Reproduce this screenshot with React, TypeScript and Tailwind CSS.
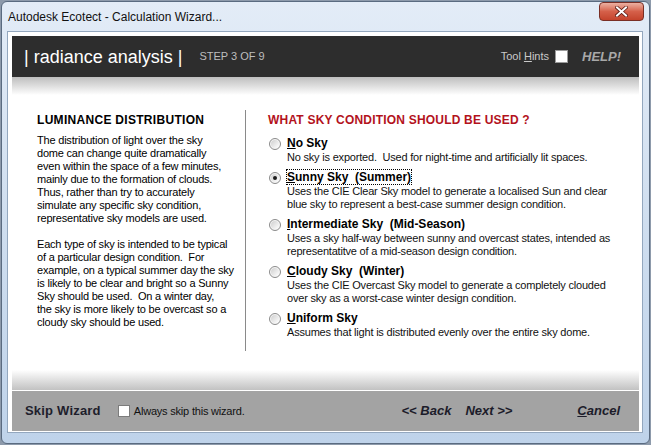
const leftText = [
  "The distribution of light over the sky",
  "dome can change quite dramatically",
  "even within the space of a few minutes,",
  "mainly due to the formation of clouds.",
  "Thus, rather than try to accurately",
  "simulate any specific sky condition,",
  "representative sky models are used.",
  "",
  "Each type of sky is intended to be typical",
  "of a particular design condition.  For",
  "example, on a typical summer day the sky",
  "is likely to be clear and bright so a Sunny",
  "Sky should be used.  On a winter day,",
  "the sky is more likely to be overcast so a",
  "cloudy sky should be used.",
];

type SkyOption = {
  key: string;
  hot: string;
  rest: string;
  lines: string[];
};

const options: SkyOption[] = [
  {
    key: "none",
    hot: "N",
    rest: "o Sky",
    lines: ["No sky is exported.  Used for night-time and artificially lit spaces."],
  },
  {
    key: "sunny",
    hot: "S",
    rest: "unny Sky  (Summer)",
    lines: [
      "Uses the CIE Clear Sky model to generate a localised Sun and clear",
      "blue sky to represent a best-case summer design condition.",
    ],
  },
  {
    key: "intermediate",
    hot: "I",
    rest: "ntermediate Sky  (Mid-Season)",
    lines: [
      "Uses a sky half-way between sunny and overcast states, intended as",
      "representatitve of a mid-season design condition.",
    ],
  },
  {
    key: "cloudy",
    hot: "C",
    rest: "loudy Sky  (Winter)",
    lines: [
      "Uses the CIE Overcast Sky model to generate a completely clouded",
      "over sky as a worst-case winter design condition.",
    ],
  },
  {
    key: "uniform",
    hot: "U",
    rest: "niform Sky",
    lines: ["Assumes that light is distributed evenly over the entire sky dome."],
  },
];

function Radio({ checked }: { checked?: boolean }) {
  return (
    <svg width="12" height="12" viewBox="0 0 12 12">
      <defs>
        <linearGradient id="radioFill" x1="0" y1="0" x2="1" y2="1">
          <stop offset="0" stopColor="#cfcfcf" />
          <stop offset="1" stopColor="#ffffff" />
        </linearGradient>
      </defs>
      <circle cx="6" cy="6" r="5.5" fill="#f6f6f6" stroke="#8b8b8b" />
      <circle cx="6" cy="6" r="4" fill="url(#radioFill)" />
      {checked && <circle cx="6" cy="6" r="2" fill="#1c1c1c" />}
    </svg>
  );
}

function CloseButton() {
  return (
    <div className="flex h-[19px] w-[45px] items-center justify-center self-start rounded-[4px] border border-[#7a2f25] bg-linear-to-b from-[#eab0a2] via-[#d5604a] to-[#c4432c]">
      <svg width="13" height="11" viewBox="0 0 13 11">
        <path d="M2 1.5 L11 9.5 M11 1.5 L2 9.5" stroke="#5a1a12" strokeWidth="3.6" strokeLinecap="square" />
        <path d="M2 1.5 L11 9.5 M11 1.5 L2 9.5" stroke="#ffffff" strokeWidth="2" strokeLinecap="square" />
      </svg>
    </div>
  );
}

export default function App() {
  return (
    <div className="h-[445px] w-[651px] bg-[#8d9aab] p-px font-['Liberation_Sans',Arial,sans-serif]">
      <div className="flex h-full flex-col rounded-[6px] border border-[#5a6b80] bg-linear-to-b from-[#e3ecf7] via-[#cfdeef] to-[#bfd3ea]">
        {/* title bar */}
        <div className="flex h-[29px] items-center justify-between pl-[6px] pr-[5px]">
          <span className="text-[12px] text-[#111]">Autodesk Ecotect - Calculation Wizard...</span>
          <CloseButton />
        </div>

        <div className="mb-[10px] ml-[5px] mr-[6px] flex flex-1 flex-col border border-[#93a7be] bg-white pb-px pl-[4px] pr-[3px] pt-[4px]">
          {/* dark header */}
          <div className="flex h-[41px] items-center bg-[#2d2d2d] pl-[12px] pr-[18px]">
            <span className="text-[18px] leading-none text-white">| radiance analysis |</span>
            <span className="ml-[17px] text-[11px] text-[#bdbdbd]">STEP 3 OF 9</span>
            <div className="ml-auto flex items-center">
              <span className="text-[11px] text-[#c9c9c9]">
                Tool <span className="underline">H</span>ints
              </span>
              <div className="ml-[6px] h-[13px] w-[13px] border border-[#9a9a9a] bg-white" />
              <span className="ml-[14px] text-[13px] font-bold italic text-[#a8a8a8]">HELP!</span>
            </div>
          </div>
          <div className="h-[18px] bg-linear-to-b from-[#bebebe] to-white" />

          {/* content */}
          <div className="flex flex-1">
            <div className="mt-[15px] h-[241px] w-[234px] border-r border-[#8a8a8a] pl-[25px] pt-[3px]">
              <div className="text-[12px] font-bold leading-[14px] tracking-[0.3px] text-black">
                LUMINANCE DISTRIBUTION
              </div>
              <div className="mt-[7px] text-[11px] leading-[13px] tracking-[-0.2px] text-black">
                {leftText.map((line, i) => (
                  <div key={i} className="h-[13px] whitespace-pre">
                    {line}
                  </div>
                ))}
              </div>
            </div>

            <div className="flex-1 pl-[22px] pt-[18px]">
              <div className="text-[12px] font-bold leading-[14px] tracking-[0.2px] text-[#b3121c]">
                WHAT SKY CONDITION SHOULD BE USED ?
              </div>
              <div className="mt-[9px] flex flex-col gap-[6px]">
                {options.map((o) => (
                  <div key={o.key} className="flex items-start">
                    <div className="ml-px flex h-[15px] items-center">
                      <Radio checked={o.key === "sunny"} />
                    </div>
                    <div className="ml-[6px]">
                      <div className="h-[15px] whitespace-pre text-[12px] font-bold leading-[15px] text-black">
                        <span
                          className={
                            o.key === "sunny"
                              ? "outline-1 outline-offset-0 outline-dotted outline-black"
                              : ""
                          }
                        >
                          <span className="underline">{o.hot}</span>
                          {o.rest}
                        </span>
                      </div>
                      {o.lines.map((l, i) => (
                        <div
                          key={i}
                          className="h-[13px] whitespace-pre text-[11px] leading-[13px] tracking-[-0.2px] text-[#111]"
                        >
                          {l}
                        </div>
                      ))}
                    </div>
                  </div>
                ))}
              </div>
            </div>
          </div>

          <div className="h-[20px] bg-linear-to-b from-white to-[#c2c2c2]" />
          {/* footer */}
          <div className="mt-px flex h-[40px] items-center bg-[#a3a3a3] pl-[13px] pr-[19px]">
            <span className="text-[13px] font-bold tracking-[0.2px] text-[#1e1e2c]">Skip Wizard</span>
            <div className="ml-[17px] h-[12px] w-[12px] border border-[#7c7c7c] bg-white" />
            <span className="ml-[4px] text-[11px] tracking-[-0.2px] text-[#111]">Always skip this wizard.</span>
            <div className="ml-auto flex items-center text-[13px] font-bold italic text-[#1c1c2a]">
              <span>&lt;&lt; Back</span>
              <span className="ml-[14px]">Next &gt;&gt;</span>
              <span className="ml-[65px]">
                <span className="underline">C</span>ancel
              </span>
            </div>
          </div>
        </div>
      </div>
    </div>
  );
}
